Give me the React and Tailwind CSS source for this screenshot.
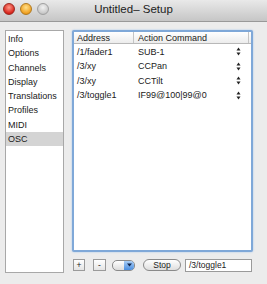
import React from "react";

const side = ["Info", "Options", "Channels", "Display", "Translations", "Profiles", "MIDI", "OSC"];
const rows = [
  ["/1/fader1", "SUB-1"],
  ["/3/xy", "CCPan"],
  ["/3/xy", "CCTilt"],
  ["/3/toggle1", "IF99@100|99@0"],
];

function Stepper() {
  return (
    <svg width="5" height="9" viewBox="0 0 5 9" className="block">
      <path d="M2.5 0.5 L4.5 3.5 L0.5 3.5 Z" fill="#222" />
      <path d="M2.5 8.5 L4.5 5.5 L0.5 5.5 Z" fill="#222" />
    </svg>
  );
}

export default function App() {
  return (
    <div
      className="w-[267px] h-[284px] bg-[#ececec] flex flex-col overflow-hidden text-[#1a1a1a]"
      style={{ fontFamily: '"Liberation Sans", Arial, sans-serif' }}
    >
      <div className="h-[22px] shrink-0 relative bg-gradient-to-b from-[#e9e9e9] to-[#c6c6c6] border-b border-[#999]">
        <div className="absolute left-[3px] top-[3px] flex gap-[5px]">
          <div className="w-[12px] h-[12px] rounded-full bg-[radial-gradient(circle_at_50%_35%,#ff9a8a,#d8231a_70%,#a31510)] border border-[#9b2a22]" />
          <div className="w-[12px] h-[12px] rounded-full bg-[radial-gradient(circle_at_50%_35%,#ffe08a,#f0a020_70%,#c07a10)] border border-[#b07a20]" />
          <div className="w-[12px] h-[12px] rounded-full bg-[radial-gradient(circle_at_50%_35%,#f2f2f2,#c8c8c8_70%,#a8a8a8)] border border-[#a0a0a0]" />
        </div>
        <div className="absolute inset-x-0 top-[2px] text-center text-[11.5px] leading-[15px] text-[#222]">
          Untitled– Setup
        </div>
      </div>
      <div className="flex pt-[8px] pl-[5px]">
        <div className="w-[59px] h-[243px] bg-white border border-[#a8a8a8] pt-[1px] text-[9px]">
          {side.map((s) => (
            <div
              key={s}
              className={`h-[14.3px] leading-[14px] pl-[2px] ${s === "OSC" ? "bg-[#d4d4d4]" : ""}`}
            >
              {s}
            </div>
          ))}
        </div>
        <div className="ml-[8px] w-[181px] flex flex-col">
          <div className="h-[222px] bg-white border-2 border-[#7fa8d8] rounded-[2px] shadow-[0_0_2px_#9cc0ea] text-[9px] flex flex-col">
            <div className="h-[12px] flex border-b border-[#b8b8b8] bg-gradient-to-b from-white to-[#ececec] leading-[12px]">
              <div className="w-[60px] pl-[3px] border-r border-[#c4c4c4]">Address</div>
              <div className="w-[115px] pl-[4px] border-r border-[#c4c4c4]">Action Command</div>
              <div className="flex-1" />
            </div>
            {rows.map(([a, c], i) => (
              <div key={i} className="h-[14px] flex items-center leading-[14px] mt-[0.5px]">
                <div className="w-[60px] pl-[3px]">{a}</div>
                <div className="w-[102px] pl-[4px]">{c}</div>
                <Stepper />
              </div>
            ))}
          </div>
          <div className="flex items-center mt-[7px] h-[12px] text-[8.5px]">
            <div className="ml-[1px] w-[12px] h-[12px] border border-[#9a9a9a] bg-gradient-to-b from-white to-[#e4e4e4] flex items-center justify-center leading-none">+</div>
            <div className="ml-[8px] w-[13px] h-[12px] border border-[#9a9a9a] bg-gradient-to-b from-white to-[#e4e4e4] flex items-center justify-center leading-none">-</div>
            <div className="ml-[6px] w-[23px] h-[11px] rounded-[5px] border border-[#8a8a8a] bg-gradient-to-b from-white to-[#dcdcdc] flex justify-end overflow-hidden">
              <div className="w-[10px] h-full bg-gradient-to-b from-[#a8cdf5] to-[#4a8ee0] flex items-center justify-center">
                <svg width="5" height="4" viewBox="0 0 5 4"><path d="M0 0.5 L5 0.5 L2.5 3.5 Z" fill="#10244a" /></svg>
              </div>
            </div>
            <div className="ml-[8px] w-[38px] h-[12px] rounded-full border border-[#8a8a8a] bg-gradient-to-b from-white to-[#dedede] flex items-center justify-center leading-none">Stop</div>
            <div className="ml-[4px] w-[67px] h-[13px] border border-[#9a9a9a] bg-white pl-[3px] leading-[11px]">/3/toggle1</div>
          </div>
        </div>
      </div>
    </div>
  );
}
